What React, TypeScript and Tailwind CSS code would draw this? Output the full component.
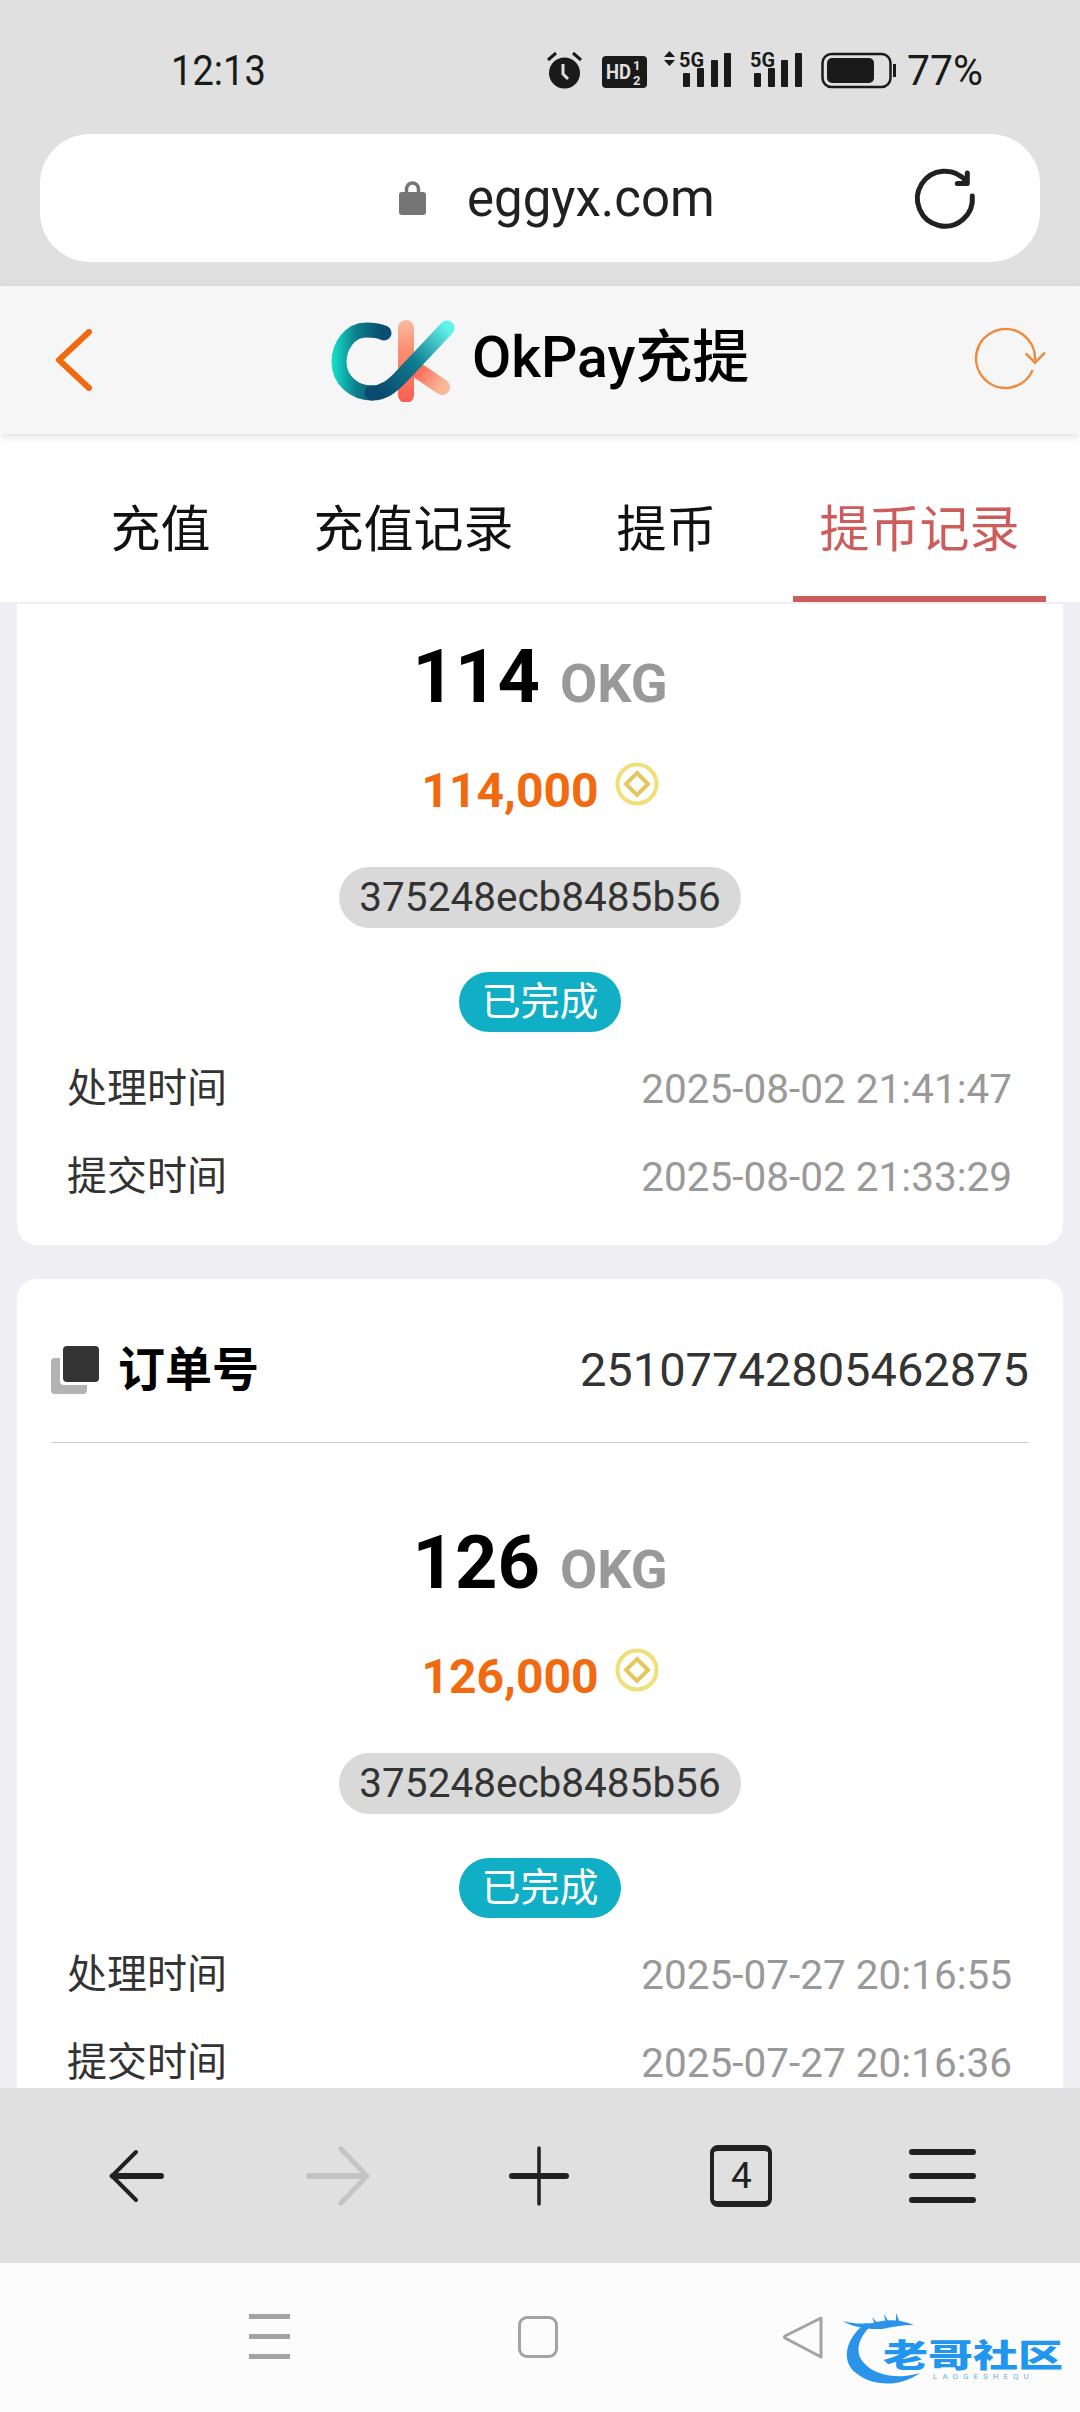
import React from "react";

const cjk = "font-['Roboto','Noto_Sans_CJK_SC',sans-serif]";

interface OrderData {
    id?: string;
    amount: string;
    value: string;
    processed: string;
    submitted: string;
}

const orders: OrderData[] = [
    {
        amount: "114",
        value: "114,000",
        processed: "2025-08-02 21:41:47",
        submitted: "2025-08-02 21:33:29",
    },
    {
        id: "25107742805462875",
        amount: "126",
        value: "126,000",
        processed: "2025-07-27 20:16:55",
        submitted: "2025-07-27 20:16:36",
    },
];

const tabs = ["充值", "充值记录", "提币", "提币记录"];

const StatusIcons = () => (
    <svg width="354" height="42" viewBox="0 0 354 42" className="block">
        {/* alarm */}
        <circle cx="20.5" cy="24" r="15.5" fill="#1a1a1a" />
        <path d="M19 15v10l5 5" stroke="#e0e0e0" strokeWidth="3" fill="none" />
        <path d="M4 11l8-7M37 11l-8-7" stroke="#1a1a1a" strokeWidth="3" />
        {/* HD */}
        <rect x="58" y="7" width="45" height="32" rx="4" fill="#1a1a1a" />
        <text x="62" y="30" fontSize="21" fontWeight="700" fill="#e0e0e0" fontFamily="Roboto" textLength="25" lengthAdjust="spacingAndGlyphs">HD</text>
        <text x="89" y="21" fontSize="13" fontWeight="700" fill="#e0e0e0" fontFamily="Roboto">1</text>
        <text x="89" y="36" fontSize="13" fontWeight="700" fill="#e0e0e0" fontFamily="Roboto">2</text>
        {/* first signal */}
        <path d="M120 8l5.5-6 5.5 6zM120 11l5.5 6 5.5-6z" fill="#1a1a1a" />
        <text x="135" y="18" fontSize="21" fontWeight="700" fill="#1a1a1a" fontFamily="Roboto" textLength="25" lengthAdjust="spacingAndGlyphs">5G</text>
        <rect x="139" y="24" width="7" height="14" rx="1" fill="#1a1a1a" />
        <rect x="153" y="19" width="7" height="19" rx="1" fill="#1a1a1a" />
        <rect x="167" y="11" width="7" height="27" rx="1" fill="#1a1a1a" />
        <rect x="180" y="4" width="7" height="34" rx="1" fill="#1a1a1a" />
        {/* second signal */}
        <text x="206" y="18" fontSize="21" fontWeight="700" fill="#1a1a1a" fontFamily="Roboto" textLength="25" lengthAdjust="spacingAndGlyphs">5G</text>
        <rect x="210" y="24" width="7" height="14" rx="1" fill="#1a1a1a" />
        <rect x="224" y="19" width="7" height="19" rx="1" fill="#1a1a1a" />
        <rect x="237" y="11" width="7" height="27" rx="1" fill="#1a1a1a" />
        <rect x="251" y="4" width="7" height="34" rx="1" fill="#1a1a1a" />
        {/* battery */}
        <rect x="278.5" y="5" width="68" height="33" rx="9" fill="none" stroke="#1a1a1a" strokeWidth="2.5" />
        <rect x="283" y="9" width="47" height="25" rx="5" fill="#1a1a1a" />
        <rect x="349" y="15" width="3" height="13" fill="#1a1a1a" />
    </svg>
);

const LockIcon = () => (
    <svg width="27" height="34" viewBox="0 0 27 34" className="block">
        <path d="M7.5 13V8a6 6 0 0 1 12 0v5" stroke="#757575" strokeWidth="3.5" fill="none" />
        <rect x="0" y="11" width="27" height="23" rx="3" fill="#757575" />
    </svg>
);

const ReloadIcon = () => (
    <svg width="70" height="70" viewBox="0 0 70 70" fill="none" stroke="#212121" strokeWidth="5" strokeLinecap="round" strokeLinejoin="round">
        <path d="M62.3 33A27.5 27.5 0 1 1 56 18" />
        <path d="M57.3 10v10.5H47.3" />
    </svg>
);

const CkLogo = () => (
    <svg width="128" height="84" viewBox="0 0 128 84" fill="none" strokeLinecap="round">
        <defs>
            <linearGradient id="kv" gradientUnits="userSpaceOnUse" x1="76" y1="2" x2="76" y2="85">
                <stop offset="0" stopColor="#f9bd9e" />
                <stop offset="0.35" stopColor="#fb8f74" />
                <stop offset="1" stopColor="#fb5f50" />
            </linearGradient>
            <linearGradient id="kd" gradientUnits="userSpaceOnUse" x1="84" y1="50" x2="112" y2="69">
                <stop offset="0" stopColor="#fb5f50" />
                <stop offset="1" stopColor="#f8b896" />
            </linearGradient>
            <linearGradient id="co" gradientUnits="userSpaceOnUse" x1="2" y1="40" x2="50" y2="40">
                <stop offset="0" stopColor="#14e0cc" />
                <stop offset="0.5" stopColor="#0d7f8c" />
                <stop offset="1" stopColor="#0a4f72" />
            </linearGradient>
            <linearGradient id="cs" gradientUnits="userSpaceOnUse" x1="50" y1="74" x2="117" y2="10">
                <stop offset="0" stopColor="#0a4a6e" />
                <stop offset="0.5" stopColor="#0f7c8f" />
                <stop offset="1" stopColor="#62f3e8" />
            </linearGradient>
        </defs>
        <path d="M76 10V77" stroke="url(#kv)" strokeWidth="16" />
        <path d="M84 50l28 19" stroke="url(#kd)" strokeWidth="16" />
        <path d="M54 15C48 12 40 12 36 12 20 12 9 28 9 44 9 62 24 75 42 75" stroke="url(#co)" strokeWidth="15" />
        <path d="M42 75C54 75 62 68 70 60L117 10" stroke="url(#cs)" strokeWidth="15" />
    </svg>
);

const HeaderRefresh = () => (
    <svg width="76" height="76" viewBox="0 0 76 76" fill="none" stroke="#ed8a3c" strokeWidth="2.5">
        <path d="M60.7 48A29.5 29.5 0 1 1 63 38" />
        <path d="M53.7 31.3L63 40.7 73 30.7" />
    </svg>
);

const CoinIcon = () => (
    <svg width="44" height="44" viewBox="0 0 44 44" fill="none">
        <circle cx="22" cy="22" r="19.5" stroke="#efe07a" strokeWidth="4" />
        <path d="M22 11l11 11-11 11-11-11z" stroke="#e3c75c" strokeWidth="4" />
    </svg>
);

const OrderIcon = () => (
    <svg width="48" height="48" viewBox="0 0 48 48">
        <rect x="0" y="12" width="36" height="36" rx="4" fill="#b3b3b3" />
        <rect x="9" y="0" width="39" height="39" rx="4" fill="#ffffff" />
        <rect x="12" y="0" width="36" height="36" rx="4" fill="#333333" />
    </svg>
);

// the first card is scrolled under the tabs, so only its lower part shows
const OrderCard = ({ order }: { order: OrderData }) => (
    <div className={order.id ? "bg-white rounded-[20px] px-[34px] pb-[24px] flex flex-col items-center" : "bg-white rounded-b-[20px] px-[34px] pb-[24px] flex flex-col items-center"}>
        {order.id && (
            <div className="w-full h-[164px] pt-[19px] border-b border-[#cfcfcf] flex items-center justify-between">
                <div className="flex items-center gap-[19px]">
                    <OrderIcon />
                    <span className="text-[47px] font-bold text-black">订单号</span>
                </div>
                <span className="text-[47px] text-[#333333]">{order.id}</span>
            </div>
        )}
        <div className={order.id ? "mt-[75px] h-[90px] flex items-baseline gap-[20px]" : "mt-[28px] h-[90px] flex items-baseline gap-[20px]"}>
            <span className="text-[74px] leading-[90px] font-bold text-black">{order.amount}</span>
            <span className="text-[54px] font-bold text-[#999999]">OKG</span>
        </div>
        <div className="mt-[39px] h-[60px] flex items-center gap-[16px]">
            <span className="text-[48px] font-bold text-[#f26a0f]">{order.value}</span>
            <div className="-mt-[14px]">
                <CoinIcon />
            </div>
        </div>
        <div className="mt-[46px] h-[61px] px-[20px] rounded-full bg-[#d9d9d9] text-[40.5px] text-[#333333] flex items-center">
            375248ecb8485b56
        </div>
        <div className="mt-[44px] h-[60px] px-[22px] rounded-full bg-[#10afc6] text-[39px] text-white flex items-center">
            已完成
        </div>
        <div className="mt-[13px] w-full pl-[16px] pr-[17px]">
            <div className="h-[88px] flex items-center justify-between">
                <span className="text-[40px] text-[#333333]">处理时间</span>
                <span className="text-[40.5px] text-[#999999]">{order.processed}</span>
            </div>
            <div className="h-[88px] flex items-center justify-between">
                <span className="text-[40px] text-[#333333]">提交时间</span>
                <span className="text-[40.5px] text-[#999999]">{order.submitted}</span>
            </div>
        </div>
    </div>
);

const BottomBar = () => (
    <div className="h-[175px] bg-[#e0e0e0] grid grid-cols-5 px-[34px] items-center shrink-0">
        <div className="flex justify-center">
            <svg width="56" height="56" viewBox="0 0 56 56" fill="none" stroke="#212121" strokeLinecap="round" className="ml-[4px]">
                <path d="M27 4L3 28l0 0 24 24" strokeWidth="4" />
                <path d="M4 28h48" strokeWidth="6" />
            </svg>
        </div>
        <div className="flex justify-center">
            <svg width="64" height="60" viewBox="0 0 64 60" fill="none" stroke="#c4c4c4" strokeLinecap="round">
                <path d="M35 3l26 27-26 27" strokeWidth="5" />
                <path d="M3 30h56" strokeWidth="6" />
            </svg>
        </div>
        <div className="flex justify-center">
            <svg width="60" height="60" viewBox="0 0 60 60" fill="none" stroke="#212121" strokeLinecap="round" className="-ml-[1px]">
                <path d="M30 2v56" strokeWidth="3.5" />
                <path d="M3 30h54" strokeWidth="6" />
            </svg>
        </div>
        <div className="flex justify-center">
            <div className="-ml-[2px] w-[62px] h-[62px] border-[4px] border-t-[6px] border-b-[6px] border-[#212121] rounded-[8px] flex items-center justify-center text-[37px] text-[#212121] font-['Roboto',sans-serif]">
                4
            </div>
        </div>
        <div className="-ml-[4px] flex flex-col gap-[18px] items-center">
            <div className="w-[67px] h-[6px] rounded-full bg-[#212121]" />
            <div className="w-[67px] h-[6px] rounded-full bg-[#212121]" />
            <div className="w-[67px] h-[6px] rounded-full bg-[#212121]" />
        </div>
    </div>
);

const NavBar = () => (
    <div className="relative h-[149px] bg-[#fcfcfc] shrink-0 flex items-center">
        <div className="w-[290px] pl-[249px] flex flex-col gap-[15px] -mt-[2px]">
            <div className="w-[41px] h-[5px] bg-[#a3a3a3]" />
            <div className="w-[41px] h-[5px] bg-[#a3a3a3]" />
            <div className="w-[41px] h-[5px] bg-[#a3a3a3]" />
        </div>
        <div className="ml-[228px] w-[40px] h-[42px] border-[3px] border-[#a3a3a3] rounded-[9px] -mt-[2px]" />
        <div className="ml-[224px] -mt-[2px]">
            <svg width="42" height="44" viewBox="0 0 42 44" fill="none" stroke="#a3a3a3" strokeWidth="3" strokeLinejoin="round">
                <path d="M39 3L3 21q-1 1 0 2l36 19z" />
            </svg>
        </div>
        {/* watermark */}
        <div className="absolute left-[842px] top-[48px] w-[230px] h-[75px]">
            <svg width="95" height="75" viewBox="0 0 95 75" className="absolute left-0 top-0" fill="#2a93ea">
                <path d="M24 12C4 26-2 50 14 62 28 74 56 78 78 62 60 68 34 66 22 52 12 42 16 26 30 14Z" />
                <path d="M1 10c10 3 20 3 30 2C44 8 58 8 72 14 60 14 50 16 40 18L30 18C20 17 8 15 1 10Z" />
                <path d="M30 6l8 9-4 1zM42 3l6 10-4 1zM54 2l4 10-4 1z" />
            </svg>
            <span className="absolute left-[41px] top-[26px] text-[45px] leading-[34px] font-black text-[#2196ee] font-['Noto_Sans_CJK_SC',sans-serif] scale-y-[0.7] whitespace-nowrap">老哥社区</span>
            <span className="absolute left-[91px] top-[61px] text-[8px] leading-[9px] text-[#6aaee6] tracking-[5px] font-['Roboto',sans-serif] whitespace-nowrap">LAOGESHEQU</span>
        </div>
    </div>
);

export default function App() {
    return (
        <div className={`w-[1080px] h-[2412px] overflow-hidden flex flex-col bg-[#eeeef3] ${cjk}`}>
            <div className="bg-[#e0e0e0] h-[286px] shrink-0 pt-[46px] px-[40px]">
                <div className="h-[48px] flex items-center justify-between pl-[131px] pr-[57px]">
                    <span className="text-[43px] text-[#1a1a1a] origin-left scale-x-[0.885]">12:13</span>
                    <div className="flex items-center gap-[5px]">
                        <StatusIcons />
                        <span className="text-[43px] text-[#1a1a1a] origin-right scale-x-[0.95]">77%</span>
                    </div>
                </div>
                <div className="mt-[40px] h-[128px] bg-white rounded-[50px] flex items-center pl-[359px] pr-[60px]">
                    <LockIcon />
                    <span className="ml-[41px] mt-[2px] text-[51px] text-[#212121]">eggyx.com</span>
                    <div className="ml-auto">
                        <ReloadIcon />
                    </div>
                </div>
            </div>
            <div className="relative z-10 h-[148px] shrink-0 bg-[#f6f6f6] shadow-[0_3px_8px_rgba(0,0,0,0.12)] flex items-center pl-[55px] pr-[32px]">
                <svg width="38" height="62" viewBox="0 0 38 62" fill="none" stroke="#f06a12" strokeWidth="6" strokeLinecap="round" strokeLinejoin="round">
                    <path d="M34 3L4 31l30 28" />
                </svg>
                <div className="ml-[237px] flex items-center gap-[14px]">
                    <CkLogo />
                    <span className="-mt-[5px] text-[57px] font-medium text-black">OkPay充提</span>
                </div>
                <div className="ml-auto">
                    <HeaderRefresh />
                </div>
            </div>
            <div className="relative z-[5] h-[168px] shrink-0 bg-white grid grid-cols-4 px-[34px]">
                {tabs.map((tab, index) => (
                    <div
                        key={tab}
                        className={
                            index === 3
                                ? "flex items-center justify-center text-[50px] text-[#cd5c5c] border-b-[6px] border-[#cd5c5c] pt-[30px]"
                                : "flex items-center justify-center text-[50px] text-[#111111] border-b-[6px] border-transparent pt-[30px]"
                        }
                    >
                        {tab}
                    </div>
                ))}
            </div>
            <div className="relative z-[5] h-[2px] shrink-0 bg-[#eeeef3]" />
            <div className="flex-1 min-h-0 overflow-hidden px-[17px]">
                <div className="flex flex-col gap-[34px]">
                    {orders.map(order => (
                        <OrderCard key={order.amount} order={order} />
                    ))}
                </div>
            </div>
            <BottomBar />
            <NavBar />
        </div>
    );
}
